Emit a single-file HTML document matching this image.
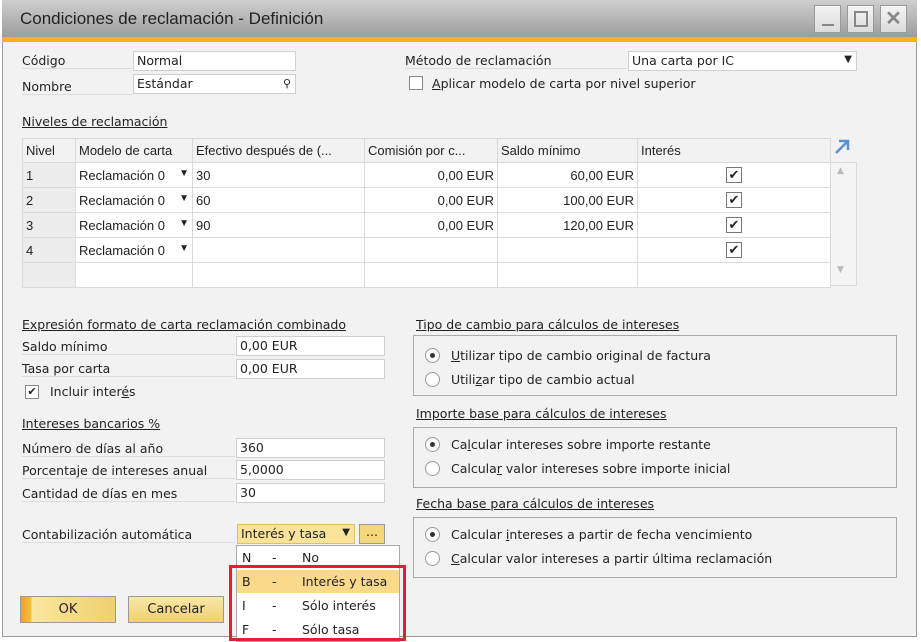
<!DOCTYPE html>
<html><head><meta charset="utf-8"><style>
*{box-sizing:border-box;margin:0;padding:0}
body{width:921px;height:642px;background:#fff;font-family:"DejaVu Sans","Liberation Sans",sans-serif;font-size:12.5px;color:#222;position:relative;overflow:hidden}
.a{position:absolute;white-space:nowrap}
.win{position:absolute;left:2px;top:0;width:915px;height:637px;background:#f2f2f2;border:1px solid #9a9a9a}
.title{position:absolute;left:2px;top:0;width:915px;height:37px;background:linear-gradient(#cfcfcf,#9c9c9c);}
.orange{position:absolute;left:2px;top:37px;width:915px;height:5px;background:#f6b318}
.tb{position:absolute;top:5px;width:27px;height:28px;background:linear-gradient(#f4f4f4,#dcdcdc);border:1px solid #999}
.inp{position:absolute;background:#fff;border:1px solid #cfcfcf;height:20px;padding:1px 3px;line-height:16px}
.lbl{position:absolute;white-space:nowrap;border-bottom:1px solid #dcdcdc}
.u{text-decoration:underline}
.cb{position:absolute;width:14px;height:14px;border:1px solid #888;background:#fff;font-size:11px;line-height:12px;text-align:center}
.box{position:absolute;border:1px solid #aaa;left:413px;width:484px;height:61px}
.rad{position:absolute;width:15px;height:15px;border:1px solid #999;border-radius:50%;background:#fff}
.rad.on::after{content:"";position:absolute;left:4px;top:4px;width:5px;height:5px;border-radius:50%;background:#333}
table{position:absolute;left:22px;top:138px;border-collapse:collapse;table-layout:fixed;font-family:"Liberation Sans",sans-serif;font-size:13px}
td{border:1px solid #dadada;height:25px;padding:0 3px;white-space:nowrap;overflow:hidden;background:#fff}
tr.h td{background:#f2f2f2;height:24px}
td.n{background:#ececec}
td.r{text-align:right}
.tcb{display:inline-block;width:16px;height:16px;border:1px solid #777;background:#fff;font-size:13px;line-height:14px;text-align:center;vertical-align:middle}
.btn{position:absolute;top:596px;width:96px;height:27px;border:1px solid #999;background:linear-gradient(#f9e9a8,#f0d070);text-align:center;line-height:25px;font-size:13px}
</style></head><body>
<div class="win"></div>
<div class="title"></div>
<div class="orange"></div>
<div class="a" style="left:20px;top:9px;font-size:17px;color:#222;font-family:'Liberation Sans',sans-serif">Condiciones de reclamación - Definición</div>
<div class="tb" style="left:814px"><div style="position:absolute;left:7px;top:18px;width:12px;height:2px;background:#888"></div></div>
<div class="tb" style="left:847px"><div style="position:absolute;left:6px;top:5px;width:14px;height:16px;border:2px solid #888"></div></div>
<div class="tb" style="left:880px;font-size:20px;color:#888;text-align:center;line-height:26px;font-weight:bold;font-family:'Liberation Sans',sans-serif">✕</div>

<div class="lbl" style="left:22px;top:53px;width:110px">Código</div>
<div class="inp" style="left:133px;top:51px;width:163px">Normal</div>
<div class="lbl" style="left:22px;top:79px;width:110px">Nombre</div>
<div class="inp" style="left:133px;top:74px;width:163px">Estándar<span style="position:absolute;right:4px;top:1px;font-size:11px">⚲</span></div>
<div class="lbl" style="left:405px;top:53px;width:222px">Método de reclamación</div>
<div class="inp" style="left:628px;top:51px;width:229px">Una carta por IC<span style="position:absolute;right:4px;top:0;font-size:10px">▼</span></div>
<div class="cb" style="left:409px;top:76px"></div>
<div class="a" style="left:432px;top:76px"><span class="u">A</span>plicar modelo de carta por nivel superior</div>
<div class="a u" style="left:22px;top:114px;width:146px;overflow:hidden">Niveles de reclamación</div>

<table>
<colgroup><col style="width:53px"><col style="width:117px"><col style="width:172px"><col style="width:133px"><col style="width:140px"><col style="width:193px"></colgroup>
<tr class="h"><td>Nivel</td><td style="padding-right:0;text-overflow:clip">Modelo de carta</td><td>Efectivo después de (...</td><td>Comisión por c...</td><td>Saldo mínimo</td><td>Interés</td></tr>
<tr><td class="n">1</td><td>Reclamación 0<span style="float:right;font-size:10px">▼</span></td><td>30</td><td class="r">0,00 EUR</td><td class="r">60,00 EUR</td><td style="text-align:center"><span class="tcb">✔</span></td></tr>
<tr><td class="n">2</td><td>Reclamación 0<span style="float:right;font-size:10px">▼</span></td><td>60</td><td class="r">0,00 EUR</td><td class="r">100,00 EUR</td><td style="text-align:center"><span class="tcb">✔</span></td></tr>
<tr><td class="n">3</td><td>Reclamación 0<span style="float:right;font-size:10px">▼</span></td><td>90</td><td class="r">0,00 EUR</td><td class="r">120,00 EUR</td><td style="text-align:center"><span class="tcb">✔</span></td></tr>
<tr><td class="n">4</td><td>Reclamación 0<span style="float:right;font-size:10px">▼</span></td><td></td><td></td><td></td><td style="text-align:center"><span class="tcb">✔</span></td></tr>
<tr><td class="n"></td><td></td><td></td><td></td><td></td><td></td></tr>
</table>
<div class="a" style="left:830px;top:162px;width:27px;height:124px;background:#f4f4f4;border:1px solid #dadada"></div>
<div class="a" style="left:837px;top:166px;font-size:9px;color:#bbb">▲</div>
<div class="a" style="left:837px;top:265px;font-size:9px;color:#bbb">▼</div>
<svg class="a" style="left:833px;top:138px" width="18" height="18"><path d="M3 15 L14 4 M6 3 H15 V12" stroke="#5b8fd0" stroke-width="2.5" fill="none"/></svg>

<div class="a u" style="left:22px;top:317px">Expresión formato de carta reclamación combinado</div>
<div class="lbl" style="left:22px;top:339px;width:213px">Saldo mínimo</div>
<div class="inp" style="left:236px;top:336px;width:149px">0,00 EUR</div>
<div class="lbl" style="left:22px;top:361px;width:213px">Tasa por carta</div>
<div class="inp" style="left:236px;top:359px;width:149px">0,00 EUR</div>
<div class="cb" style="left:25px;top:385px">✔</div>
<div class="a" style="left:50px;top:384px">Incluir inter<span class="u">é</span>s</div>
<div class="a u" style="left:22px;top:416px">Intereses bancarios %</div>
<div class="lbl" style="left:22px;top:441px;width:213px">Número de días al año</div>
<div class="inp" style="left:236px;top:438px;width:149px">360</div>
<div class="lbl" style="left:22px;top:463px;width:213px">Porcentaje de intereses anual</div>
<div class="inp" style="left:236px;top:460px;width:149px">5,0000</div>
<div class="lbl" style="left:22px;top:486px;width:213px">Cantidad de días en mes</div>
<div class="inp" style="left:236px;top:483px;width:149px">30</div>
<div class="lbl" style="left:22px;top:527px;width:213px">Contabilización automática</div>
<div class="inp" style="left:237px;top:524px;width:118px;background:#fbe39a;border-color:#d8c070">Interés y tasa<span style="position:absolute;right:4px;top:0;font-size:10px">▼</span></div>
<div class="inp" style="left:359px;top:524px;width:26px;background:#f3d77a;border-color:#999;text-align:center;line-height:12px">...</div>

<div class="a" style="left:236px;top:545px;width:164px;height:97px;background:#fff;border:1px solid #aaa"></div>
<div class="a" style="left:237px;top:570px;width:162px;height:23px;background:#fbd98a"></div>
<div class="a" style="left:242px;top:550px">N</div><div class="a" style="left:272px;top:550px">-</div><div class="a" style="left:302px;top:550px">No</div>
<div class="a" style="left:242px;top:574px">B</div><div class="a" style="left:272px;top:574px">-</div><div class="a" style="left:302px;top:574px">Interés y tasa</div>
<div class="a" style="left:242px;top:598px">I</div><div class="a" style="left:272px;top:598px">-</div><div class="a" style="left:302px;top:598px">Sólo interés</div>
<div class="a" style="left:242px;top:622px">F</div><div class="a" style="left:272px;top:622px">-</div><div class="a" style="left:302px;top:622px">Sólo tasa</div>
<div class="a" style="left:229px;top:565px;width:177px;height:76px;border:3px solid #e0202a"></div>

<div class="btn" style="left:20px;background:linear-gradient(90deg,#f0a020 0,#f6c040 10px,#f9e6a0 11px,#f0d070)">OK</div>
<div class="btn" style="left:128px">Cancelar</div>

<div class="a u" style="left:416px;top:317px">Tipo de cambio para cálculos de intereses</div>
<div class="box" style="top:335px"></div>
<div class="rad on" style="left:425px;top:348px"></div><div class="a" style="left:451px;top:348px"><span class="u">U</span>tilizar tipo de cambio original de factura</div>
<div class="rad" style="left:425px;top:372px"></div><div class="a" style="left:451px;top:372px">Utili<span class="u">z</span>ar tipo de cambio actual</div>
<div class="a u" style="left:416px;top:406px">Importe base para cálculos de intereses</div>
<div class="box" style="top:427px"></div>
<div class="rad on" style="left:425px;top:437px"></div><div class="a" style="left:451px;top:437px">Ca<span class="u">l</span>cular intereses sobre importe restante</div>
<div class="rad" style="left:425px;top:461px"></div><div class="a" style="left:451px;top:461px">Calcula<span class="u">r</span> valor intereses sobre importe inicial</div>
<div class="a u" style="left:416px;top:496px">Fecha base para cálculos de intereses</div>
<div class="box" style="top:517px"></div>
<div class="rad on" style="left:425px;top:527px"></div><div class="a" style="left:451px;top:527px">Calcular <span class="u">i</span>ntereses a partir de fecha vencimiento</div>
<div class="rad" style="left:425px;top:551px"></div><div class="a" style="left:451px;top:551px"><span class="u">C</span>alcular valor intereses a partir última reclamación</div>
</body></html>
